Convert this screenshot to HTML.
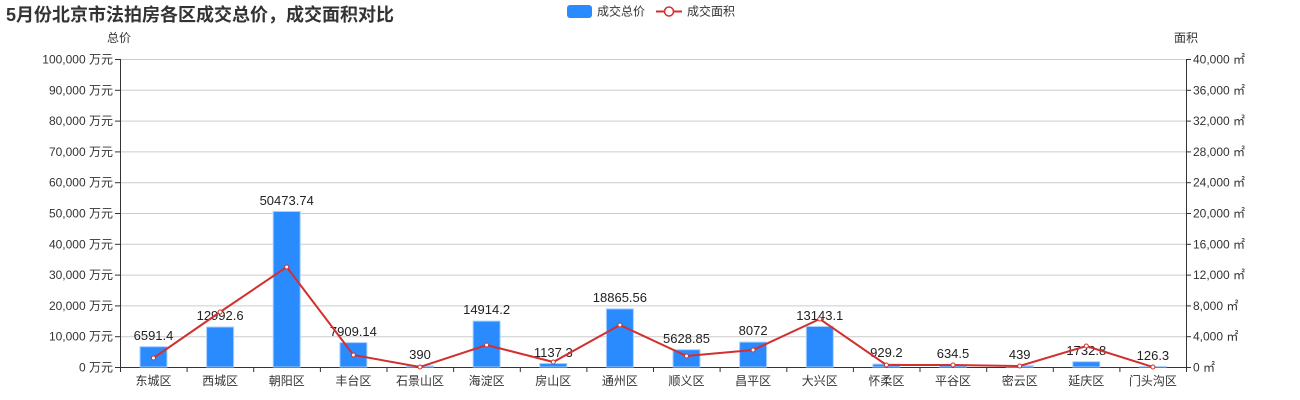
<!DOCTYPE html>
<html><head><meta charset="utf-8"><style>
body{margin:0;background:#fff;width:1300px;height:400px;overflow:hidden}
svg{display:block;font-family:"Liberation Sans","Noto Sans CJK SC",sans-serif}
</style></head><body>
<svg width="1300" height="400" viewBox="0 0 1300 400">
<text x="6" y="21" font-size="18" font-weight="bold" fill="#333">5月份北京市法拍房各区成交总价，成交面积对比</text>
<rect x="567" y="5" width="25" height="13" rx="3" fill="#2a8bff"/>
<text x="597" y="15.5" font-size="12" fill="#333">成交总价</text>
<line x1="656" y1="11.5" x2="682" y2="11.5" stroke="#d2302f" stroke-width="2"/>
<circle cx="669" cy="11.5" r="4.5" fill="#fff" stroke="#d2302f" stroke-width="1.5"/>
<text x="687" y="15.5" font-size="12" fill="#333">成交面积</text>
<text x="119" y="42" font-size="12" fill="#333" text-anchor="middle">总价</text>
<text x="1186" y="42" font-size="12" fill="#333" text-anchor="middle">面积</text>
<g stroke="#ccc" stroke-width="1">
<line x1="120" y1="59.5" x2="1186" y2="59.5"/><line x1="120" y1="90.3" x2="1186" y2="90.3"/><line x1="120" y1="121.1" x2="1186" y2="121.1"/><line x1="120" y1="151.9" x2="1186" y2="151.9"/><line x1="120" y1="182.7" x2="1186" y2="182.7"/><line x1="120" y1="213.5" x2="1186" y2="213.5"/><line x1="120" y1="244.3" x2="1186" y2="244.3"/><line x1="120" y1="275.1" x2="1186" y2="275.1"/><line x1="120" y1="305.9" x2="1186" y2="305.9"/><line x1="120" y1="336.7" x2="1186" y2="336.7"/>
</g>
<g font-size="12" fill="#333" text-anchor="end">
<text x="113" y="63.5">100,000 万元</text><text x="113" y="94.3">90,000 万元</text><text x="113" y="125.1">80,000 万元</text><text x="113" y="155.9">70,000 万元</text><text x="113" y="186.7">60,000 万元</text><text x="113" y="217.5">50,000 万元</text><text x="113" y="248.3">40,000 万元</text><text x="113" y="279.1">30,000 万元</text><text x="113" y="309.9">20,000 万元</text><text x="113" y="340.7">10,000 万元</text><text x="113" y="371.5">0 万元</text>
</g>
<g font-size="12" fill="#333">
<text x="1193" y="63.5">40,000 ㎡</text><text x="1193" y="94.3">36,000 ㎡</text><text x="1193" y="125.1">32,000 ㎡</text><text x="1193" y="155.9">28,000 ㎡</text><text x="1193" y="186.7">24,000 ㎡</text><text x="1193" y="217.5">20,000 ㎡</text><text x="1193" y="248.3">16,000 ㎡</text><text x="1193" y="279.1">12,000 ㎡</text><text x="1193" y="309.9">8,000 ㎡</text><text x="1193" y="340.7">4,000 ㎡</text><text x="1193" y="371.5">0 ㎡</text>
</g>
<g stroke="#333" stroke-width="1">
<line x1="120.5" y1="59" x2="120.5" y2="367"/><line x1="115" y1="59.5" x2="120" y2="59.5"/>
<line x1="1186.5" y1="59" x2="1186.5" y2="367"/>
<line x1="120" y1="367.5" x2="1187" y2="367.5"/>
<line x1="115" y1="90.3" x2="120" y2="90.3"/><line x1="115" y1="121.1" x2="120" y2="121.1"/><line x1="115" y1="151.9" x2="120" y2="151.9"/><line x1="115" y1="182.7" x2="120" y2="182.7"/><line x1="115" y1="213.5" x2="120" y2="213.5"/><line x1="115" y1="244.3" x2="120" y2="244.3"/><line x1="115" y1="275.1" x2="120" y2="275.1"/><line x1="115" y1="305.9" x2="120" y2="305.9"/><line x1="115" y1="336.7" x2="120" y2="336.7"/><line x1="115" y1="367.5" x2="120" y2="367.5"/>
<line x1="1186" y1="59.5" x2="1191" y2="59.5"/><line x1="1186" y1="90.3" x2="1191" y2="90.3"/><line x1="1186" y1="121.1" x2="1191" y2="121.1"/><line x1="1186" y1="151.9" x2="1191" y2="151.9"/><line x1="1186" y1="182.7" x2="1191" y2="182.7"/><line x1="1186" y1="213.5" x2="1191" y2="213.5"/><line x1="1186" y1="244.3" x2="1191" y2="244.3"/><line x1="1186" y1="275.1" x2="1191" y2="275.1"/><line x1="1186" y1="305.9" x2="1191" y2="305.9"/><line x1="1186" y1="336.7" x2="1191" y2="336.7"/><line x1="1186" y1="367.5" x2="1191" y2="367.5"/>
<line x1="120.5" y1="367" x2="120.5" y2="372"/><line x1="187.1" y1="367" x2="187.1" y2="372"/><line x1="253.7" y1="367" x2="253.7" y2="372"/><line x1="320.4" y1="367" x2="320.4" y2="372"/><line x1="387" y1="367" x2="387" y2="372"/><line x1="453.6" y1="367" x2="453.6" y2="372"/><line x1="520.3" y1="367" x2="520.3" y2="372"/><line x1="586.9" y1="367" x2="586.9" y2="372"/><line x1="653.5" y1="367" x2="653.5" y2="372"/><line x1="720.1" y1="367" x2="720.1" y2="372"/><line x1="786.8" y1="367" x2="786.8" y2="372"/><line x1="853.4" y1="367" x2="853.4" y2="372"/><line x1="920" y1="367" x2="920" y2="372"/><line x1="986.7" y1="367" x2="986.7" y2="372"/><line x1="1053.3" y1="367" x2="1053.3" y2="372"/><line x1="1119.9" y1="367" x2="1119.9" y2="372"/><line x1="1186.5" y1="367" x2="1186.5" y2="372"/>
</g>
<g fill="#2a8bff" stroke="#a9cfff" stroke-width="1">
<rect x="140" y="346.7" width="27" height="20.3"/><rect x="206.6" y="327" width="27" height="40"/><rect x="273.2" y="211.5" width="27" height="155.5"/><rect x="339.9" y="342.6" width="27" height="24.4"/><rect x="406.5" y="365.8" width="27" height="1.2"/><rect x="473.1" y="321.1" width="27" height="45.9"/><rect x="539.8" y="363.5" width="27" height="3.5"/><rect x="606.4" y="308.9" width="27" height="58.1"/><rect x="673" y="349.7" width="27" height="17.3"/><rect x="739.6" y="342.1" width="27" height="24.9"/><rect x="806.3" y="326.5" width="27" height="40.5"/><rect x="872.9" y="364.1" width="27" height="2.9"/><rect x="939.5" y="365" width="27" height="2"/><rect x="1006.2" y="365.6" width="27" height="1.4"/><rect x="1072.8" y="361.7" width="27" height="5.3"/><rect x="1139.4" y="366.6" width="27" height="0.4"/>
</g>
<g font-size="13" fill="#222" text-anchor="middle">
<text x="153.5" y="340">6591.4</text><text x="220.1" y="320">12992.6</text><text x="286.7" y="205">50473.74</text><text x="353.4" y="336">7909.14</text><text x="420" y="359">390</text><text x="486.6" y="314">14914.2</text><text x="553.3" y="357">1137.3</text><text x="619.9" y="302">18865.56</text><text x="686.5" y="343">5628.85</text><text x="753.1" y="335">8072</text><text x="819.8" y="320">13143.1</text><text x="886.4" y="357">929.2</text><text x="953" y="358">634.5</text><text x="1019.7" y="359">439</text><text x="1086.3" y="355">1732.8</text><text x="1152.9" y="360">126.3</text>
</g>
<polyline fill="none" stroke="#d2302f" stroke-width="2" points="153.5,358 220.1,312 286.7,267 353.4,355 420,367 486.6,345 553.3,362 619.9,325 686.5,356 753.1,350 819.8,319 886.4,365 953,365 1019.7,366 1086.3,346 1152.9,367"/>
<g fill="#fff" stroke="#d2302f" stroke-width="1">
<circle cx="153.5" cy="358" r="2"/><circle cx="220.1" cy="312" r="2"/><circle cx="286.7" cy="267" r="2"/><circle cx="353.4" cy="355" r="2"/><circle cx="420" cy="367" r="2"/><circle cx="486.6" cy="345" r="2"/><circle cx="553.3" cy="362" r="2"/><circle cx="619.9" cy="325" r="2"/><circle cx="686.5" cy="356" r="2"/><circle cx="753.1" cy="350" r="2"/><circle cx="819.8" cy="319" r="2"/><circle cx="886.4" cy="365" r="2"/><circle cx="953" cy="365" r="2"/><circle cx="1019.7" cy="366" r="2"/><circle cx="1086.3" cy="346" r="2"/><circle cx="1152.9" cy="367" r="2"/>
</g>
<g font-size="12" fill="#333" text-anchor="middle">
<text x="153.5" y="385">东城区</text><text x="220.1" y="385">西城区</text><text x="286.7" y="385">朝阳区</text><text x="353.4" y="385">丰台区</text><text x="420" y="385">石景山区</text><text x="486.6" y="385">海淀区</text><text x="553.3" y="385">房山区</text><text x="619.9" y="385">通州区</text><text x="686.5" y="385">顺义区</text><text x="753.1" y="385">昌平区</text><text x="819.8" y="385">大兴区</text><text x="886.4" y="385">怀柔区</text><text x="953" y="385">平谷区</text><text x="1019.7" y="385">密云区</text><text x="1086.3" y="385">延庆区</text><text x="1152.9" y="385">门头沟区</text>
</g>
</svg>
</body></html>
